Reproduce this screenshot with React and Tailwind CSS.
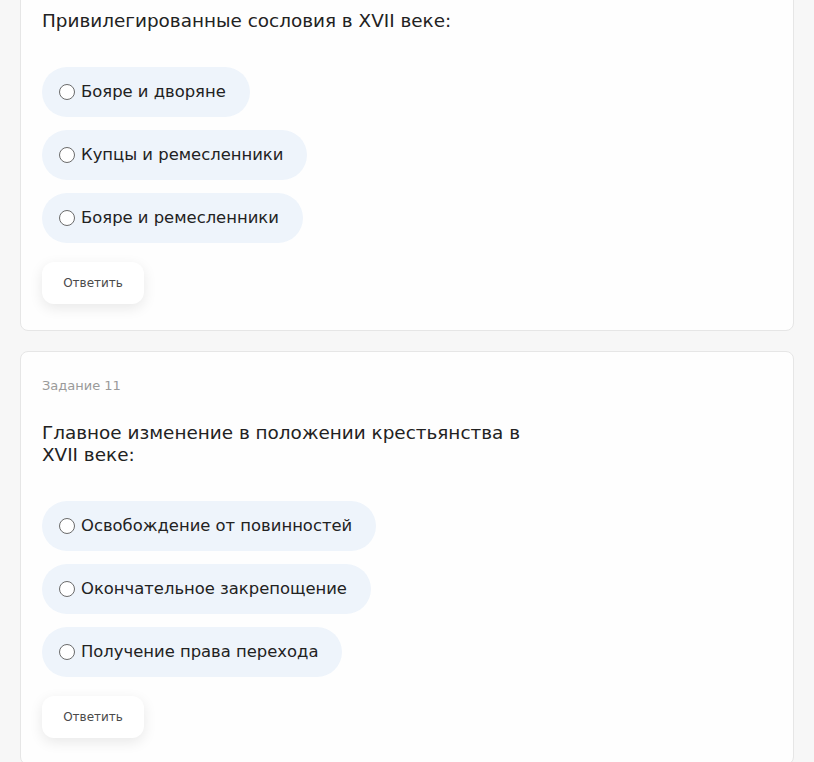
const tasks = [
  {
    id: 10,
    question: "Привилегированные сословия в XVII веке:",
    options: ["Бояре и дворяне", "Купцы и ремесленники", "Бояре и ремесленники"],
  },
  {
    id: 11,
    question: "Главное изменение в положении крестьянства в XVII веке:",
    options: [
      "Освобождение от повинностей",
      "Окончательное закрепощение",
      "Получение права перехода",
    ],
  },
];

const TaskCard = ({ task, showLabel = true, className }) => {
  return (
    <div
      className={`rounded-lg border border-[#e6e6e6] bg-[#fefefe] pt-[24px] px-[21px] pb-[26px] ${className}`}
    >
      {showLabel && (
        <p className="mb-[26px] text-[13px] leading-[20px] text-[#9a9a9a]">Задание {task.id}</p>
      )}
      <h3 className="max-w-[480px] text-[18.4px] leading-[22px] text-[#222]">
        {task.question}
      </h3>

      <div className="mt-[35px] flex flex-col items-start gap-[13px]">
        {task.options.map((opt) => (
          <label
            key={opt}
            className="flex h-[50px] items-center rounded-full bg-[#eef4fb] pl-[17px] pr-[24px] cursor-pointer"
          >
            <input type="radio" name={`task-${task.id}`} className="sr-only" />
            <span className="h-[16px] w-[16px] rounded-full border border-[#6b6b6b] bg-white" />
            <span className="ml-[6px] text-[16.4px] text-[#222]">{opt}</span>
          </label>
        ))}
      </div>

      <button className="mt-[19px] h-[42px] w-[102px] rounded-xl bg-white text-[12px] font-medium text-[#4a4a4a] shadow-[0_4px_14px_rgba(0,0,0,0.09)]">
        Ответить
      </button>
    </div>
  );
};

const App = () => {
  return (
    <div
      className="min-h-screen overflow-hidden bg-[#f7f7f7] px-[20px] pb-10"
      style={{ fontFamily: '"DejaVu Sans", sans-serif' }}
    >
      <TaskCard task={tasks[0]} showLabel={false} className="-mt-[15px]" />
      <TaskCard task={tasks[1]} className="mt-[20px]" />
    </div>
  );
};

export default App;
